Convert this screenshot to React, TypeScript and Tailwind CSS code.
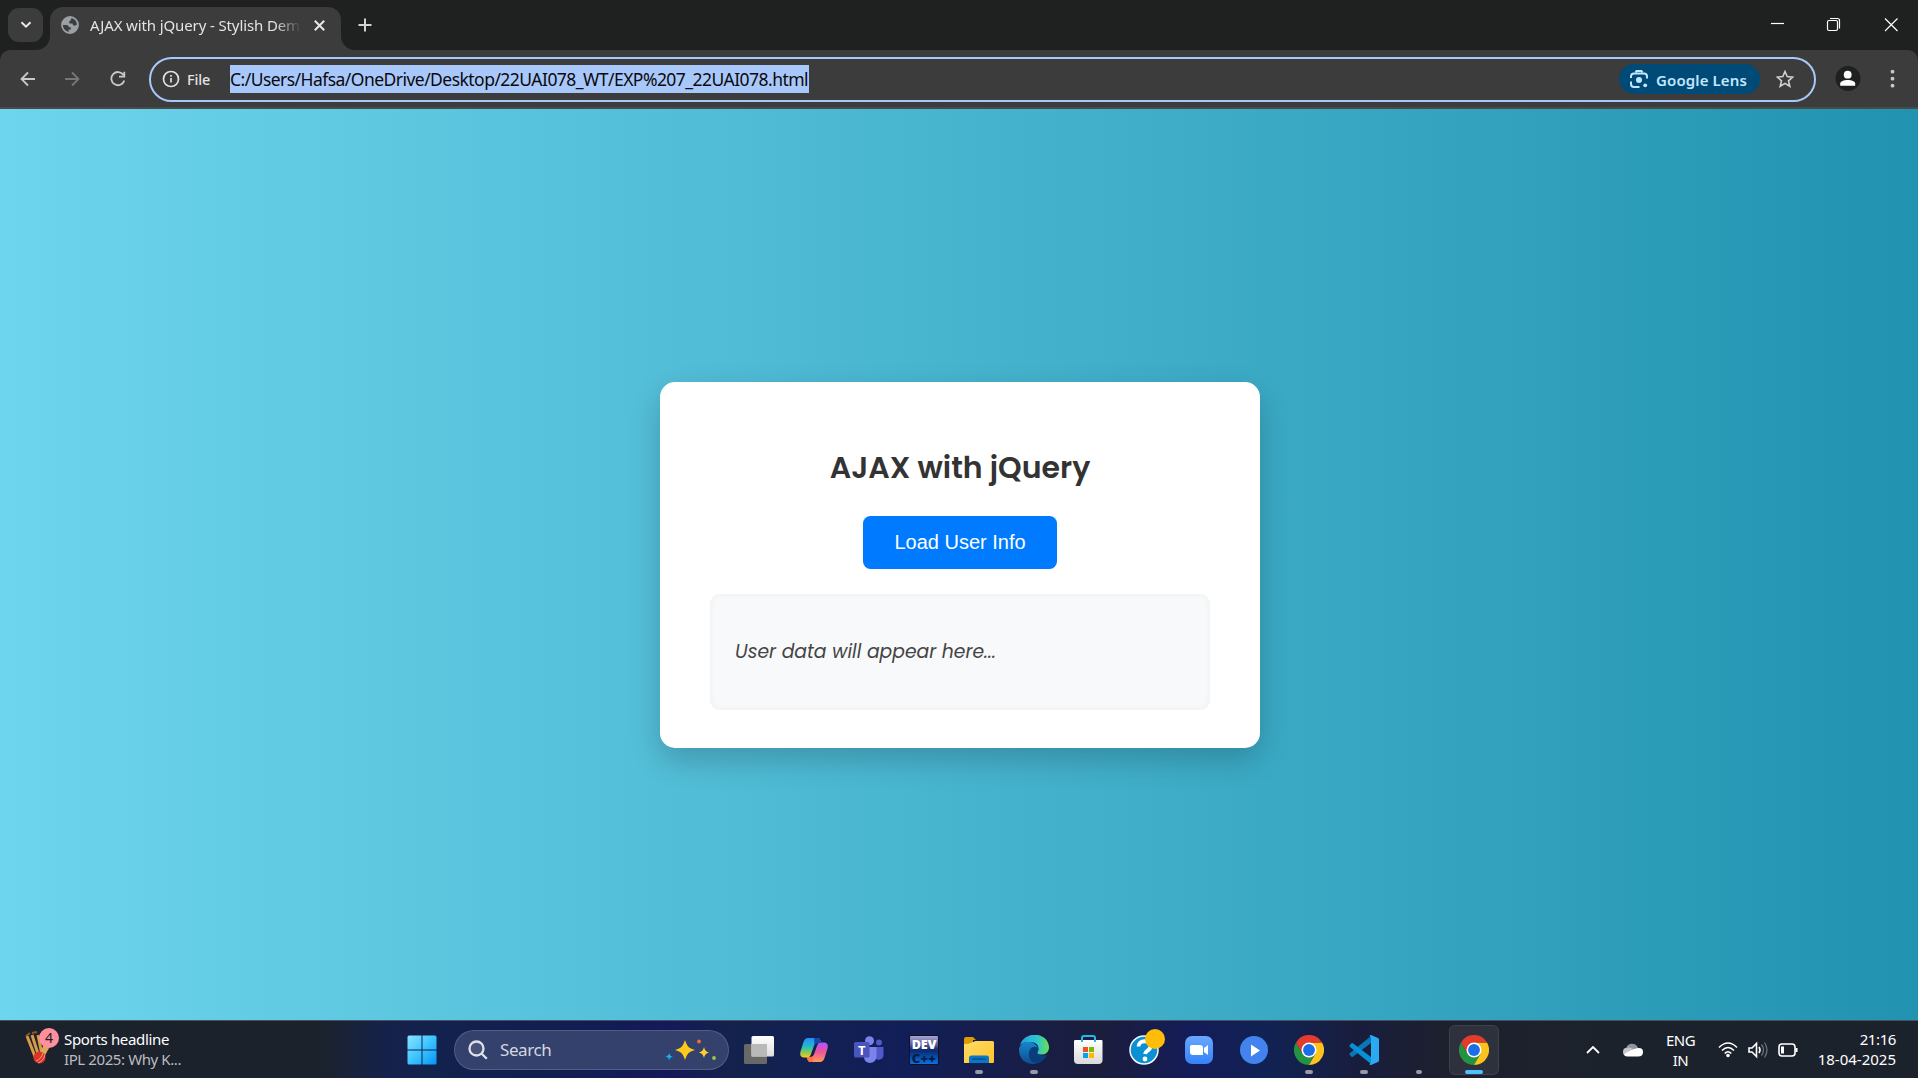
import React from "react";

function Chrome() {
  return (
    <svg width="30" height="30" viewBox="0 0 48 48">
      <path d="M13.6 30 L3.2 12 A24 24 0 0 0 24 48 L34.4 30 Z" fill="#229342" />
      <path d="M24 12 H44.8 A24 24 0 0 1 24 48 L34.4 30 Z" fill="#fcc31e" />
      <path d="M24 12 H44.8 A24 24 0 0 0 3.2 12 L13.6 30 Z" fill="#e33b2e" />
      <circle cx="24" cy="24" r="12" fill="#fff" />
      <circle cx="24" cy="24" r="9.5" fill="#1a6fe8" />
    </svg>
  );
}

type TaskProps = { children?: React.ReactNode; mark?: "run" | "dot" | "active" };

function Task({ children, mark }: TaskProps) {
  return (
    <div className={"relative flex h-[50px] w-[50px] shrink-0 items-center justify-center rounded-md " + (mark === "active" ? "bg-white/8 ring-1 ring-white/8 ring-inset" : "")}>
      {children}
      {mark === "run" && <span className="absolute bottom-[1px] h-1 w-2 rounded-full bg-[#9799a8]" />}
      {mark === "dot" && <span className="absolute bottom-[1px] h-1 w-1.5 rounded-full bg-[#9799a0]" />}
      {mark === "active" && <span className="absolute bottom-[1px] h-1 w-[18px] rounded-full bg-[#4cc2ff]" />}
    </div>
  );
}

function TabStrip() {
  return (
    <div className="flex h-[50px] bg-[#1f2120]">
      <div className="mt-2 ml-2 flex h-[34px] w-[35px] items-center justify-center rounded-[11px] bg-[#3c3c3c]">
        <svg width="12" height="8" viewBox="0 0 12 8" fill="none" stroke="#e8e8e8" strokeWidth="2"><path d="M1.5 1.2 6 5.7l4.500-4.500" /></svg>
      </div>
      <div className="relative mt-[7px] ml-[7px] flex h-[43px] w-[291px] rounded-t-[13px] bg-[#3c3c3c] pl-[11px]">
        <svg className="absolute bottom-0 -left-[14px]" width="14" height="14"><path d="M14 0V14H0A14 14 0 0 0 14 0" fill="#3c3c3c" /></svg>
        <svg className="absolute -right-[14px] bottom-0" width="14" height="14"><path d="M0 0V14H14A14 14 0 0 1 0 0" fill="#3c3c3c" /></svg>
        <svg className="mt-[9px] shrink-0" width="18" height="18" viewBox="0 0 18 18">
          <circle cx="9" cy="9" r="8" fill="#3c3c3c" stroke="#9aa0a6" strokeWidth="1.800" />
          <path d="M10.200 1C6 .2 1.500 3.500 1 9h4.500c1.800 0 2.300 1.200 2.300 2.200h2v2.200H7.700v3.200C12 17.500 17 14 17 9c-1.300-.8-2.200 0-3 .8-1.300 0-2.500-.6-2.500-2.200H8.300V5.500c0-1 1.900-.5 1.900-2.200z" fill="#9aa0a6" />
        </svg>
        <div className="mt-[7px] ml-[11px] w-[211px] shrink-0 overflow-hidden text-[15px] leading-[22px] tracking-[-0.12px] whitespace-nowrap text-[#e3e3e3] [mask-image:linear-gradient(to_right,black_185px,transparent_211px)]">
          AJAX with jQuery - Stylish Demo
        </div>
        <svg className="mt-[13px] ml-[13px] shrink-0" width="11" height="11" viewBox="0 0 11 11" stroke="#e8e8e8" strokeWidth="2"><path d="M.8.800l9.400 9.400M10.200.8.800 10.200" /></svg>
      </div>
      <svg className="mt-[18px] ml-[17px]" width="14" height="14" stroke="#d2d2d2" strokeWidth="2"><path d="M7 .5v13M.5 7h13" /></svg>
      <div className="flex-1" />
      <svg className="mt-[17px]" width="150" height="16" fill="none" stroke="#fff" strokeWidth="1.200">
        <path d="M3 6.500h13" />
        <rect x="59.500" y="3.500" width="10" height="10" rx="1.500" />
        <path d="M62 1.500h7.500a2 2 0 0 1 2 2v8" />
        <path d="M117 1.500l12.500 12.500M129.500 1.500 117 14" />
      </svg>
    </div>
  );
}

function Toolbar() {
  return (
    <div className="bg-[#1f2120]">
      <div className="flex h-[59px] items-start rounded-t-[10px] border-b-2 border-[#4a4a4a] bg-[#3c3c3c] pt-[7px]">
        <svg className="mt-[14px] ml-5" width="108" height="16" fill="none" strokeWidth="1.800">
          <path d="M15 8H1.500M8 1.500 1.500 8 8 14.500" stroke="#c9c9c9" />
          <path d="M45 8h13.500M52 1.500 58.500 8 52 14.500" stroke="#777" />
          <path d="M103.500 4A6.600 6.600 0 1 0 104.300 9.500M104.300.7V5.700H99" stroke="#c9c9c9" />
        </svg>
        <div className="ml-[21px] flex h-[45px] w-[1667px] shrink-0 items-center rounded-full border-2 border-[#a8c7fa] pb-px pl-[11px] whitespace-nowrap">
          <svg width="18" height="18" fill="none" stroke="#e0e0e0" strokeWidth="1.700"><circle cx="9" cy="9" r="7.500" /><path d="M9 8v4.500M9 5v1.700" /></svg>
          <span className="ml-[7px] w-[23px] text-[14.5px] leading-5 font-medium tracking-[-0.2px] text-[#e3e3e3]">File</span>
          <span className="ml-5 h-7 w-[579px] bg-[#a8c7fa] text-[17.5px] leading-7 tracking-[-0.54px] text-[#0a0a0a]">C:/Users/Hafsa/OneDrive/Desktop/22UAI078_WT/EXP%207_22UAI078.html</span>
          <div className="flex-1" />
          <div className="flex h-[30px] w-[141px] items-center rounded-full bg-[#004a77] pl-[11px]">
            <svg width="18" height="18" fill="none" stroke="#c2e7ff" strokeWidth="2">
              <path d="M1 8V6.500A3 3 0 0 1 4 3.500h10A3 3 0 0 1 17 6.500V8.500M1 11.500V14A3 3 0 0 0 4 17H9.500" />
              <path d="M5.500 2.500 6.500 1h5l1 1.500" /><circle cx="9" cy="10" r="3" fill="#c2e7ff" stroke="none" /><circle cx="15.200" cy="15.300" r="1.900" fill="#c2e7ff" stroke="none" />
            </svg>
            <span className="mt-0.5 ml-2 text-[15px] leading-5 font-semibold tracking-[0.12px] text-[#c2e7ff]">Google Lens</span>
          </div>
          <svg className="mr-5 ml-4" width="18" height="18" viewBox="0 0 18 18" fill="none" stroke="#cfcfcf" strokeWidth="1.600"><path d="M9 1.500l2.200 5.100 5.500.5-4.200 3.700 1.300 5.500L9 13.400l-4.800 2.900 1.300-5.500L1.300 7.100l5.500-.5z" /></svg>
        </div>
        <svg className="mt-[8px] ml-[19px]" width="26" height="26"><circle cx="13" cy="13.500" r="12.500" fill="#1f2120" /><circle cx="12.700" cy="9.700" r="3.900" fill="#fff" /><path d="M5.200 20.700v-2c0-5 15-5 15 0v2z" fill="#fff" /></svg>
        <svg className="mt-[12px] ml-[28px]" width="8" height="20" fill="#c7c7c7"><circle cx="3.500" cy="2.700" r="1.900" /><circle cx="3.500" cy="9.700" r="1.900" /><circle cx="3.500" cy="16.700" r="1.900" /></svg>
      </div>
    </div>
  );
}

function Page() {
  return (
    <main className="flex h-[911px] items-start justify-center bg-[linear-gradient(to_right,#6dd5ed,#2193b0)] pt-[273px] pl-[2px] whitespace-nowrap">
      <section className="flex h-[366px] w-[600px] flex-col items-center rounded-[15px] bg-white pt-[63px] shadow-[0_12px_31px_rgba(0,0,0,0.2)]">
        <h2 className="font-['Poppins','Open_Sans',sans-serif] text-[30px] leading-[45px] font-semibold text-[#333]">AJAX with jQuery</h2>
        <button className="mt-[26px] flex h-[53px] w-[194px] items-center justify-center rounded-[7.500px] bg-[#007bff] pb-[2px] font-['Liberation_Sans',Arial,sans-serif] text-[20px] leading-none text-white">
          Load User Info
        </button>
        <div className="mt-[25px] flex h-[116px] w-[500px] items-center rounded-[10px] bg-[#f8f9fa] pl-[25px] shadow-[inset_0_0_6px_rgba(0,0,0,0.05)]">
          <p className="font-['Poppins','Open_Sans',sans-serif] text-[18.75px] leading-7 text-[#444] italic">User data will appear here...</p>
        </div>
      </section>
    </main>
  );
}

function SearchBox() {
  return (
    <div className="ml-[7px] flex h-10 w-[275px] items-center justify-between rounded-full border border-white/15 bg-[#35416d] pr-[11px] pl-[13px]">
      <div className="flex items-center gap-3">
        <svg width="20" height="20" fill="#ffffff18" stroke="#dde1e9" strokeWidth="2.300"><circle cx="8.500" cy="8.500" r="7" /><path d="m13.500 13.500 5.300 5.300" /></svg>
        <span className="text-[17px] leading-6 tracking-[-0.4px] text-[#d3d7e1]">Search</span>
      </div>
      <svg width="52" height="24">
        <path d="M20 2c2.300 6.500 3.500 8.200 10 10-6.500 2-7.700 3.500-10 10-2.200-6.500-3.500-8-10-10 6.500-1.800 7.800-3.500 10-10z" fill="#ffc81d" />
        <path d="M39 9c1 3.500 2 4.600 5 5.500-3 1-4 2-5 5.500-1-3.500-2-4.500-5-5.500 3-1 4-2 5-5.500z" fill="#ffd02c" />
        <path d="M4.500 15c0 2.300 1 3.100 3.500 4-2.500 0-3.300 1-4 3.500-.2-2.500-1-3.500-4-4 2.500-.3 3.500-1 4.500-3.500z" fill="#16b2ed" />
        <circle cx="34" cy="3.500" r="1.900" fill="#f26c35" /><circle cx="49" cy="20" r="1.900" fill="#91cc42" />
      </svg>
    </div>
  );
}

function Apps() {
  return (
    <div className="ml-[5px] flex gap-[5px]">
      <Task><svg width="30" height="28"><defs><linearGradient id="tv" x2="0" y2="1"><stop stopColor="#fff" /><stop offset="1" stopColor="#ddd" /></linearGradient></defs><rect y="8" width="23" height="20" rx="1.500" fill="#686866" /><rect x="7.500" width="22.500" height="20.500" rx="1.500" fill="url(#tv)" /><path d="M7.500 8H23v12.500H7.500z" fill="#b9b9b9" /></svg></Task>
      <Task><svg width="28" height="26" viewBox="0 0 28 26"><defs><linearGradient id="cpa" x2="0" y2="1"><stop stopColor="#2789ff" /><stop offset=".45" stopColor="#20bdc4" /><stop offset=".75" stopColor="#91c94c" /><stop offset="1" stopColor="#ffc727" /></linearGradient><linearGradient id="cpb" x2="0" y2="1"><stop stopColor="#a957ff" /><stop offset=".45" stopColor="#ed529e" /><stop offset="1" stopColor="#ff9b58" /></linearGradient></defs><path d="M8 1h10c2 0 2.500 3 3.500 5h-4c-2 0-3 1-3.600 3L11 17c-.8 2.500-1.800 3.500-4 3.500H4c-3 0-4.500-2-3.500-6L3.500 5C4.400 2.400 5.800 1 8 1z" fill="url(#cpa)" /><path d="M20 25H10c-2 0-2.500-3-3.500-5h4c2 0 3-1 3.600-3L17 9c.8-2.500 1.800-3.500 4-3.500h3c3 0 4.500 2 3.500 6L24.500 21c-.9 2.600-2.300 4-4.500 4z" fill="url(#cpb)" /><path d="M14 1h4c2 0 2.500 3 3.500 5h-4c-1.600 0-2.500.7-3 2z" fill="#1746ac" /><path d="M6.500 20h4c1.700 0 2.700-.8 3.300-2.500L12.500 25H10c-2 0-2.500-3-3.500-5z" fill="#ff7043" /></svg></Task>
      <Task><svg width="30" height="28"><circle cx="15.500" cy="4.800" r="4.500" fill="#7b83eb" /><circle cx="25" cy="6.500" r="3" fill="#5059c9" /><path d="M20 11h9.500v8a5 5 0 0 1-9.500 2z" fill="#5059c9" /><path d="M10 11h12.500v9c0 9-12.500 9-12.500 1z" fill="#7b83eb" /><rect y="6" width="15.500" height="15.500" rx="1.500" fill="#4b53bc" /><text x="3.900" y="18.500" fill="#fff" fontSize="13" fontWeight="700" fontFamily="Open Sans">T</text></svg></Task>
      <Task>
        <div className="flex h-[30px] w-[30px] flex-col items-center rounded-[2px] border border-[#101323] bg-[linear-gradient(180deg,#a7a5cf_0,#5a5fa0_30%,#1b2c68_48%,#092e78_55%,#0873e8_100%)] pt-px font-['Open_Sans',sans-serif] font-extrabold">
          <span className="text-[12.5px] leading-[15px] text-white">DEV</span>
          <span className="text-[13px] leading-[12px] tracking-[0.2px] text-[#061b43]">C++</span>
        </div>
      </Task>
      <Task mark="run"><svg width="30" height="28" className="mt-px"><defs><linearGradient id="fold" x2="1" y2="1"><stop stopColor="#ffdd68" /><stop offset="1" stopColor="#ffc12a" /></linearGradient></defs><path d="M0 3a2 2 0 0 1 2-2h7l3 3h-3v6H0z" fill="#dc9b05" /><path d="M0 8q5 0 8-1.500L11.500 5h17A1.500 1.500 0 0 1 30 6.500V26a1 1 0 0 1-1 1H0z" fill="url(#fold)" /><path d="M5 27v-5a2.500 2.500 0 0 1 2.500-2.500h15A2.500 2.500 0 0 1 25 22v5z" fill="#0877c8" /><path d="M8 23h14" stroke="#004883" strokeWidth="1.300" /></svg></Task>
      <Task mark="run"><svg width="30" height="30"><defs><linearGradient id="ea" x2="1"><stop stopColor="#249fde" /><stop offset=".6" stopColor="#2bc7cf" /><stop offset="1" stopColor="#6ddf4c" /></linearGradient><linearGradient id="eb" x2="0" y2="1"><stop stopColor="#1688cf" /><stop offset="1" stopColor="#104b91" /></linearGradient></defs><path d="M1 10C6-5 29-3 30 12c.3 8-9 9-12 6 3-4 2-11-7-11-5 0-8 1-10 3z" fill="url(#ea)" /><path d="M0 15C0 7 12 3 18 11c1.600 2.300 1.300 5 0 7-1 1.500 4 4 9.500 2.300C21 34 0 31 0 15z" fill="url(#eb)" /><path d="M10 21c-1-8 5-11 9-8 1.200 3-1.300 4-1 6 1 3 6 2.500 9.500 1.300-3 5-6 7-9.500 7.700-4 .4-7-2-8-7z" fill="#0b3c7b" /></svg></Task>
      <Task><svg width="30" height="30"><defs><linearGradient id="store" x2="0" y2="1"><stop stopColor="#fff" /><stop offset="1" stopColor="#d9d9d9" /></linearGradient></defs><path d="M1.500 5h26q1 0 1 1v19a4 4 0 0 1-4 4H4a4 4 0 0 1-4-4V6q0-1 1.500-1z" fill="url(#store)" /><path d="M8 7V3a2 2 0 0 1 2-2h9a2 2 0 0 1 2 2v4" fill="none" stroke="#24b7f3" strokeWidth="2" /><path fill="#f25022" d="M9 12H14v5H9z" /><path fill="#7fba00" d="M15 12H20v5h-5z" /><path fill="#00a4ef" d="M9 18H14v5H9z" /><path fill="#ffb900" d="M15 18H20v5h-5z" /></svg></Task>
      <Task><svg width="30" height="30"><circle cx="15" cy="15" r="14" fill="#0b91d3" stroke="#f5fafc" strokeWidth="1.500" /><path d="M9.500 11.500c0-7 12-7 12 0 0 4-5 3.500-5.500 7.500" fill="none" stroke="#fff" strokeWidth="3.800" /><circle cx="16" cy="24" r="2.400" fill="#fff" /></svg><span className="absolute top-[4px] left-[26px] size-5 rounded-full bg-[#ffbd0a]" /></Task>
      <Task><svg width="28" height="28"><defs><linearGradient id="zoomg" x2="0" y2="1"><stop stopColor="#6aa7ff" /><stop offset="1" stopColor="#3482f9" /></linearGradient></defs><rect width="28" height="28" rx="7" fill="url(#zoomg)" /><path d="M5 10.500Q5 9 6.500 9H15q3 0 3 3v7H8q-3 0-3-3zM19 12l4-3v10l-4-3z" fill="#fff" /></svg></Task>
      <Task><svg width="28" height="28"><circle cx="14" cy="14" r="14" fill="#4283ee" /><path d="M11 8.500 20 14.500 11 20.500z" fill="#fff" /></svg></Task>
      <Task mark="run"><Chrome /></Task>
      <Task mark="run"><svg width="30" height="30"><path d="M.5 19.500 2.500 21.700q.7.500 1.400 0L22 8V1L1 18q-.8.800-.5 1.500z" fill="#0876b8" /><path d="M.5 10.500 2.500 8.300q.7-.5 1.400 0L22 22v7L1 12q-.8-.8-.5-1.500z" fill="#0790d5" /><path d="M22 0l7 3q1 .5 1 1.500v21q0 1-1 1.500l-7 3q-1 0-1.500-.5L22 27V3L20.500.5Q21 0 22 0z" fill="#29aaf2" /></svg></Task>
      <Task mark="dot" />
      <Task mark="active"><Chrome /></Task>
    </div>
  );
}

function Tray() {
  return (
    <div className="flex h-[57px] w-[338px] shrink-0 items-center text-[15px] leading-5 text-white">
      <svg width="14" height="8" className="ml-[6px]" fill="none" stroke="#fff" strokeWidth="1.800"><path d="M1 7 7 1l6 6" /></svg>
      <svg width="20" height="14" className="ml-[23px]"><path d="M3 6C4-.5 13-1 15 5l2 1-7 7z" fill="#90959c" /><path d="M3 5q4-1.500 7 1L4 13Q0 13 0 9t3-4z" fill="#c4c7ca" /><path d="M1 11q5-3 10-5 9-3 9 3 0 4.500-5 4.500H4q-2.500 0-3-2.500z" fill="#fff" /></svg>
      <div className="ml-[23px] flex w-[29px] flex-col items-center tracking-[-0.5px]">
        <span>ENG</span>
        <span>IN</span>
      </div>
      <svg width="80" height="18" className="ml-[23px]" fill="none" stroke="#fff" strokeWidth="1.600">
        <path d="M1 6.500q9-9 18 0M4 9.500q6-6 12 0M6.700 12.500q3.300-3.500 6.600 0" /><circle cx="10" cy="14.500" r="1.800" fill="#fff" stroke="none" />
        <path d="M31 7h3l4.500-4.500v13L34 11h-3zM41 6q2 3 0 6" /><path d="M43.500 3.500q4 5.500 0 11M46.500 1.500q5 7.500 0 15" stroke="#6c727b" strokeWidth="1.300" />
        <rect x="61" y="3" width="16" height="12" rx="3" /><path d="M78.500 7v4" strokeWidth="2" /><path d="M63 5.500h3v7h-3z" fill="#fff" stroke="none" />
      </svg>
      <div className="ml-[20px] flex w-[78px] flex-col items-end pb-px">
        <span className="tracking-[-0.4px]">21:16</span>
        <span>18-04-2025</span>
      </div>
    </div>
  );
}

function Taskbar() {
  return (
    <footer className="flex h-[58px] items-start border-t border-[#48525f] bg-[linear-gradient(90deg,#1c222c_0,#1c222c_320px,#14224c_390px,#101f50_540px,#15195a_670px,#14224d_730px,#111e58_900px,#1b1d3c_1100px,#141c58_1190px,#112253_1270px,#191d3c_1360px,#1d202d_1450px,#1c222c_1600px)] whitespace-nowrap">
      <div className="flex w-[397px] shrink-0 pt-[6px] pl-[25px]">
        <div className="relative h-[38px] w-9">
          <svg width="36" height="38">
            <path d="M2 9 11 32M7 8l7 22M13 8l4 20" stroke="#d79a48" strokeWidth="3" />
            <path d="M1 9l4-3M7 6l5-1" stroke="#8b5928" strokeWidth="2" />
            <path d="M25 13 14 33" stroke="#e0a75d" strokeWidth="6" />
            <circle cx="14.500" cy="30.500" r="6" fill="#dc3426" /><path d="M11 34c3-1 6-4 7-8M13 36c3-1 6-4 7-8" fill="none" stroke="#ffb3a6" strokeWidth=".8" />
          </svg>
          <span className="absolute top-[1px] left-[14px] size-5 rounded-full bg-[#ff8f9d] text-center text-[14px] leading-5 text-[#222]">4</span>
        </div>
        <div className="mt-0.5 ml-[3px] text-[15px] leading-5">
          <p className="tracking-[-0.33px] text-white">Sports headline</p>
          <p className="tracking-[-0.4px] text-[#b9bcc0]">IPL 2025: Why K...</p>
        </div>
      </div>
      <div className="flex h-[57px] items-center">
        <Task><svg width="30" height="30"><defs><linearGradient id="win" x2="1" y2="1"><stop stopColor="#8be4ff" /><stop offset=".5" stopColor="#3cc4ff" /><stop offset="1" stopColor="#0794f6" /></linearGradient></defs><path d="M.5 2a1.500 1.500 0 0 1 1.500-1.500H14.500v14H.5zM15.500.5H28a1.500 1.500 0 0 1 1.500 1.500V14.500h-14zM.5 15.500h14v14H2A1.500 1.500 0 0 1 .5 28zM15.500 15.500h14V28a1.500 1.500 0 0 1-1.500 1.500H15.500z" fill="url(#win)" /></svg></Task>
        <SearchBox />
        <Apps />
      </div>
      <div className="flex-1" />
      <Tray />
    </footer>
  );
}

export default function App() {
  return (
    <div className="flex h-[1078px] w-[1918px] flex-col overflow-hidden font-['Noto_Sans','Open_Sans',sans-serif]">
      <TabStrip />
      <Toolbar />
      <Page />
      <Taskbar />
    </div>
  );
}
